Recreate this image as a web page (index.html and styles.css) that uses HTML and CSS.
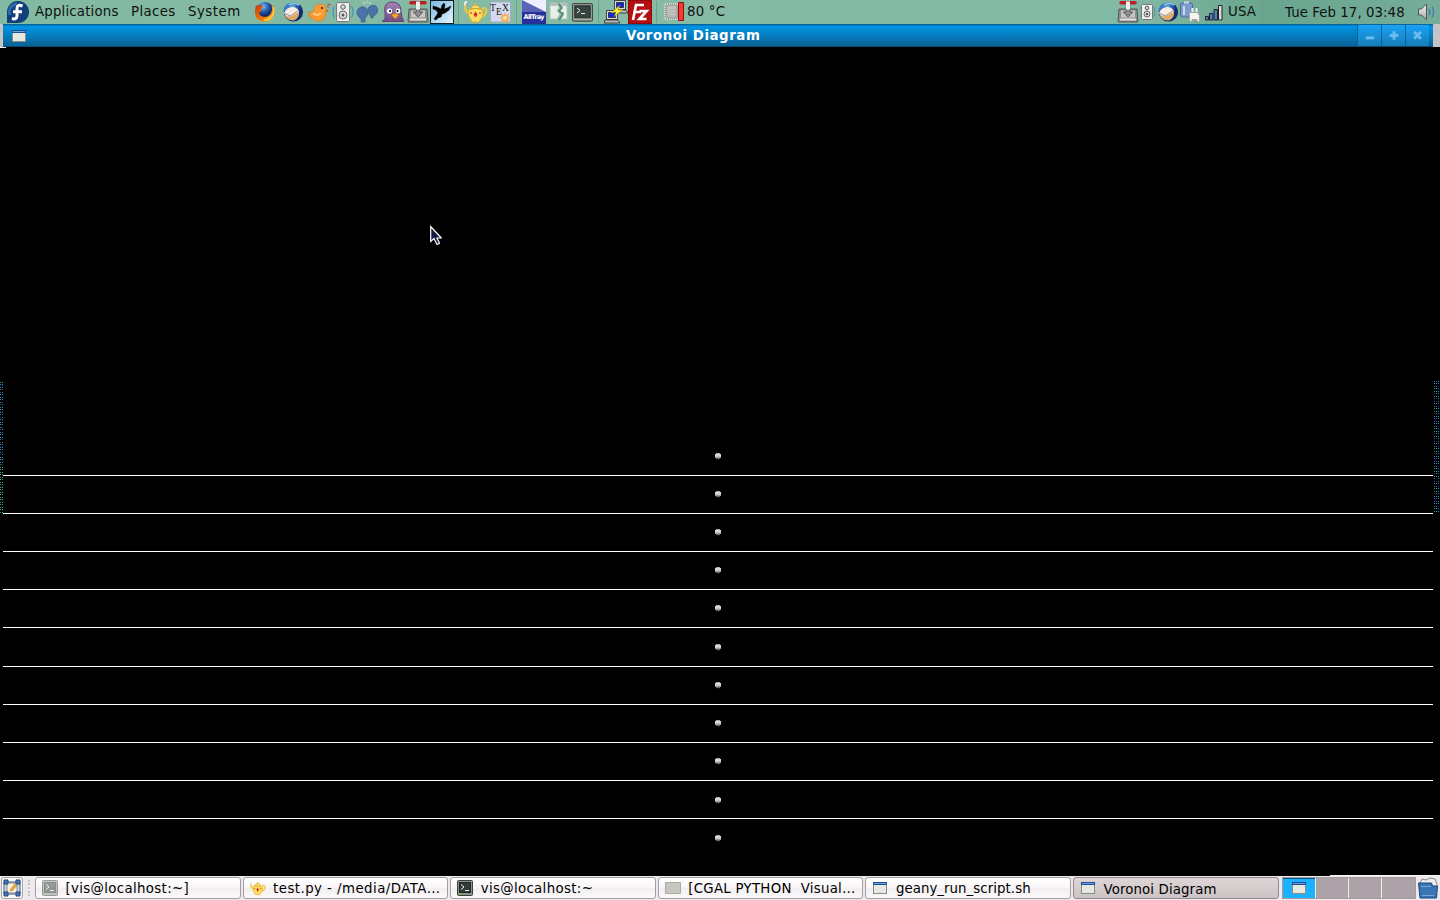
FILE: index.html
```html
<!DOCTYPE html>
<html lang="en">
<head>
<meta charset="utf-8">
<title>Voronoi Diagram</title>
<link rel="stylesheet" href="styles.css">
</head>
<body>
<svg class="defs" width="0" height="0" aria-hidden="true">
  <defs>
    <linearGradient id="fox" x1="0" y1="0" x2="1" y2="1"><stop offset="0" stop-color="#c93405"/><stop offset=".6" stop-color="#f27b0b"/><stop offset="1" stop-color="#ffd83c"/></linearGradient>
    <radialGradient id="globe" cx=".4" cy=".25"><stop offset="0" stop-color="#7fc4ee"/><stop offset=".5" stop-color="#2c69b8"/><stop offset="1" stop-color="#122a70"/></radialGradient>
    <linearGradient id="metal" x1="0" y1="0" x2="0" y2="1"><stop offset="0" stop-color="#f4f4f2"/><stop offset="1" stop-color="#aaa"/></linearGradient>
    <linearGradient id="violet" x1="0" y1="0" x2="0" y2="1"><stop offset="0" stop-color="#a087b5"/><stop offset="1" stop-color="#714b86"/></linearGradient>
    <linearGradient id="sky" x1="0" y1="0" x2="1" y2="1"><stop offset="0" stop-color="#78b6e2"/><stop offset="1" stop-color="#e8f6ff"/></linearGradient>
    <symbol id="i-window" viewBox="0 0 14 12"><rect x=".5" y=".5" width="13" height="11" fill="#e6e8e2" stroke="#8b8b88"/><path d="M0 0h14v3H0z" fill="#1d4f96"/><path d="M1 1h12v1H1z" fill="#6da0dc"/></symbol>
    <symbol id="i-term" viewBox="0 0 21 19"><rect x=".6" y=".6" width="19.8" height="17.6" rx="1.5" fill="#a9ada7" stroke="#444943" stroke-width="1.2"/><rect x="2.8" y="2.8" width="15.4" height="12" fill="#354441" stroke="#222b29"/><path d="M5 5l3 2.500L5 10M9 10.500h4" fill="none" stroke="#eee"/></symbol>
    <symbol id="i-termsmall" viewBox="0 0 16 16"><rect x=".5" y=".5" width="15" height="15" rx="1" fill="#8d928b" stroke="#3b403b"/><rect x="2.500" y="2.500" width="11" height="10" fill="#2f3c3a" stroke="#1f2725"/><path d="M4 4.500l3 2.500-3 2.500M8 10.500h4" fill="none" stroke="#eee"/><path d="M2 14h2" stroke="#6d0"/></symbol>
    <symbol id="i-geany" viewBox="0 0 24 24"><path d="M18 9c6-4 6 6-1 8M5 13Q1 13 1 5" fill="none" stroke="#f0c93c" stroke-width="2"/><path d="M4 10q8-3 15 0 0 8-3 10l-1 2H8l-1-2q-3-3-3-10z" fill="#fbdf62" stroke="#dcae2c"/><path d="M7 8.500h9l-2-3H9z" fill="#fbe47c" stroke="#d8a82b"/><path d="M11.500 3v2.500" stroke="#e5b93a" stroke-width="1.500"/><path d="M1 5q-1-3 2-3" stroke="#eef" stroke-width="2" fill="none"/><path d="M11.500 11.500l2 3-2 3-2-3z" fill="#d72728"/><circle cx="7" cy="13" r="1" fill="#e45735"/><circle cx="16" cy="13" r="1" fill="#e45735"/></symbol>
    <symbol id="i-bird" viewBox="0 0 24 24"><circle cx="12.500" cy="12" r="9.600" fill="url(#globe)"/><path d="M3 13q2-6 9-6 6 1 6 6-1 5-6 7-6 0-9-7z" fill="#f6eee2"/><path d="M4 16l6 .500 8-5q1 6-5 9-6 0-9-4.500z" fill="#dda969"/><path d="M3.500 13.500l6 2.500 7-5" fill="none" stroke="#8a7c72" stroke-width=".9"/><path d="M2 12Q3 4 9 3l3 1-3 3q-4 1-7 5z" fill="#3c7fc6"/><path d="M8 5q5-3 10 0" fill="none" stroke="#8bcaf0" stroke-width="1.600"/></symbol>
    <symbol id="i-tray" viewBox="0 0 24 24"><path d="M3 9h18l1 12q0 1-1 1H3q-1 0-1-1z" fill="#8b8e8c" stroke="#555"/><path d="M5 10.500h14v7H5z" fill="#c5c5c1"/><path d="M4 18.500h16v2H4z" fill="#e0e0dd"/><path d="M10.300 5h3.500v7h3l-4.700 5-4.800-5h3z" fill="#8e908d" stroke="#555" stroke-width=".9"/><path d="M5 2.800h14" stroke="#b92125" stroke-width="3.600" stroke-linecap="round"/><path d="M10 1.500h4v8h-4z" fill="#eee"/></symbol>
    <symbol id="i-speaker" viewBox="0 0 24 24"><rect x="5.600" y="2.600" width="13" height="19" rx="1" fill="#f1f1ef" stroke="#777"/><circle cx="12" cy="7" r="2.300" fill="#ddd" stroke="#555"/><circle cx="12" cy="15" r="4" fill="#ddd" stroke="#666"/><circle cx="12" cy="15" r="1.500" fill="#555"/><path d="M3.500 6q-3 6 0 12M20.500 6q3 6 0 12" fill="none" stroke="#4c91b7" stroke-width="1.200"/></symbol>
  </defs>
</svg>
<div class="desktop">
  <header class="panel top">
    <svg class="fedora" viewBox="0 0 22 22"><path d="M0 22V11A11 11 0 1 1 11 22z" fill="#123f7b"/><path d="M3 14a8 8 0 0 1 7-11" stroke="#2d68aa" stroke-width="3" fill="none"/><path d="M15.500 5.200q-5-2.500-5.500 2V15q-.5 4-5 2.500M6 10.700h9" fill="none" stroke="#fff" stroke-width="3"/></svg>
    <nav class="menus"><span class="m-app">Applications</span><span class="m-places">Places</span><span class="m-system">System</span></nav>
    <div class="launchers">
      <svg class="ico gap-4" viewBox="0 0 24 24"><circle cx="12" cy="11" r="9" fill="url(#globe)"/><path d="M3 5q-1 3-1 8 1 8 9 9 8 0 10-7 2-6-3-11 2 5 0 9-2 4-7 4-5-1-5-5l3-1-1-3 3-2-4-1-2 1z" fill="url(#fox)"/><path d="M20 7q2 6-2 10-3 3-7 3" fill="none" stroke="#ffd248" stroke-width="1.400"/></svg>
      <svg class="ico gap-2"><use href="#i-bird"/></svg>
      <svg class="ico" viewBox="0 0 24 24"><path d="M1 12l5 1q1-9 7-9 6 0 6 6l0 2q0 9-8 9-5 0-7-4l-3-1 2-1z" fill="#f99a35" stroke="#dc7f20" stroke-width=".7"/><path d="M6 13q4 4 8 0" fill="none" stroke="#ffc880" stroke-width="2"/><circle cx="15" cy="8" r="1" fill="#321"/><path d="M19 9l3 2-3 1" fill="#ce5f1b"/><path d="M21 8V4l3 1" fill="none" stroke="#c44f32"/></svg>
      <svg class="ico"><use href="#i-speaker"/></svg>
      <svg class="ico gap-2" viewBox="0 0 24 24"><g fill="#4b73a8" stroke="#365b90" stroke-width=".7"><path d="M3 9q4-4 8-1 3 3 1 8l-2 2v4H6q1-3-1-4-5-4-2-9z"/><path d="M14 7q3-3 7-1 3 3 1 7-2 3-4 3l0 2h-2l-1-3q-4-4-1-8z"/></g><g fill="#b5ccc2"><circle cx="9" cy="3" r="1.400"/><circle cx="12" cy="1.500" r="1"/><circle cx="15" cy="3" r="1.200"/></g></svg>
      <svg class="ico gap-1" viewBox="0 0 24 24"><path d="M1 21.500q4-2 3-8Q2 2 11 2q9 0 9 9 0 6 3 10.500z" fill="url(#violet)" stroke="#65417b"/><circle cx="8.500" cy="11" r="2.600" fill="#fff"/><circle cx="17" cy="11" r="2.400" fill="#fff"/><circle cx="9" cy="11" r="1.100"/><circle cx="16.500" cy="11" r="1.100"/><path d="M10 15l4-2 4 2-3.500 4z" fill="#f6a329" stroke="#b76713" stroke-width=".7"/></svg>
      <svg class="ico"><use href="#i-tray"/></svg>
      <svg class="ico" viewBox="0 0 24 24"><rect x=".5" y=".5" width="23" height="23" fill="url(#sky)" stroke="#10202b"/><path d="M3 6l5 1.500 3 1.500 1-4 2-2 1 2-1 4 3-1 4-2-2 4-4 3-3 1-1 3-3 1-2 2-2-1 2-3 2-3-2-3-3-1z" fill="#000" stroke="#000" stroke-width=".5"/></svg>
      <i class="sep s-a"></i>
      <svg class="ico gap-1"><use href="#i-geany"/></svg>
      <svg class="ico gap-3" viewBox="0 0 24 24"><rect x="1.500" y="2" width="20" height="20" fill="#d3daf0" stroke="#a3aec6"/><text class="tex" x="1" y="11">T</text><text class="tex" x="7" y="15">E</text><text class="tex" x="13" y="11">X</text><path d="M16 12l1 3 3-1-1 3 3 1-3 1 1 3-3-1-1 3-1-3-3 1 1-3-3-1 3-1-1-3 3 1z" fill="#f2ac5b"/><circle cx="16" cy="18" r="2" fill="#ffe2a6"/></svg>
      <i class="sep s-b"></i>
      <svg class="ico gap-1" viewBox="0 0 24 24"><path d="M0 0h24v24H0z" fill="#272f98"/><path d="M0 0h24v12H0z" fill="#5963b8"/><path d="M0 0h24v12z" fill="#eef"/><text class="alltray" x="1.500" y="18.500" textLength="21">AllTray</text></svg>
      <svg class="ico gap-1" viewBox="0 0 24 24"><path d="M3 3h7l2 5-2 3 3 3-3 5H3zM13 3h7v16h-6l3-6-5-2 3-3z" fill="#e7efea" stroke="#b0c4ba"/><path d="M3 3h7v3H3zM13 3h7v3h-6z" fill="#b3bfc0"/><path d="M12 4l3 4-3 3 4 3-4 6" fill="none" stroke="#4f8371" stroke-width="1.500"/></svg>
      <svg class="termico"><use href="#i-term"/></svg>
      <i class="sep s-c"></i>
      <svg class="ico" viewBox="0 0 24 24"><g stroke="#222" stroke-width=".8"><path d="M10.500 .5h11v9h-11zM2.500 10.500h11v9h-11z" fill="#ddd"/><path d="M12.500 2.500h7v5h-7zM4.500 12.500h7v5h-7z" fill="#1527df"/><path d="M11 10h11l2 3H14zM1 20h13l2 3H0z" fill="#bbb"/></g><path d="M16 5l-9 8 5-1-2 5 9-8-5 1z" fill="#ffef24" stroke="#9c8c00" stroke-width=".4"/></svg>
      <svg class="ico" viewBox="0 0 24 24"><path d="M0 0h24v24H0z" fill="#b60d11"/><path d="M.5 .5h23v23H.5z" fill="none" stroke="#650b0b" stroke-dasharray="2 2"/><path d="M5 20L8 5h8M6 12h7M11.500 11h7l-7 8h7" fill="none" stroke="#fff" stroke-width="2.700"/></svg>
      <i class="sep s-d"></i>
      <svg class="ico cpu" viewBox="0 0 24 24"><path d="M3 4h14v15H3z" fill="#aaa" stroke="#ddd" stroke-width="2" stroke-dasharray="1 1"/><path d="M4 5h11v13H4z" fill="#b7b7b1" stroke="#999"/><path d="M6 8h8M6 11h8M6 14h8" stroke="#ccc"/><path d="M16.500 2.500h5v18h-5z" fill="#f43b34" stroke="#930d11"/></svg>
      <span class="temp">80 °C</span>
    </div>
    <div class="tray">
      <svg class="ico"><use href="#i-tray"/></svg>
      <svg class="narrow" viewBox="4 0 16 24"><rect x="5.500" y="4.500" width="11" height="15" rx="1" fill="#f1f1ef" stroke="#777"/><circle cx="11" cy="8" r="1.800" fill="#ddd" stroke="#555"/><circle cx="11" cy="14" r="3" fill="#ddd" stroke="#666"/><circle cx="11" cy="14" r="1.200" fill="#555"/><path d="M4.300 7q-2 5 0 10M18 7q2 5 0 10" fill="none" stroke="#4c91b7"/></svg>
      <svg class="ico"><use href="#i-bird"/></svg>
      <svg class="ico" viewBox="0 0 24 24"><path d="M.5 5q0-2 2-2h8q2 0 2 2v10q0 2-2 2h-8q-2 0-2-2z" fill="#7d9ccb" stroke="#4a6b9e"/><path d="M4 1.500h5v2H4zM3 6h2v9H3z" fill="#c9daf0"/><path d="M12.500 8v4M16.500 8v4" stroke="#eee" stroke-width="2"/><path d="M9.500 12.500h8l2 3v6h-2.500v-2h-5v2H9.500v-6z" fill="#f4f4f1" stroke="#a3a8a2"/></svg>
      <svg class="signal" viewBox="0 0 18 17"><g stroke="#222" fill="#4d7fc0"><path d="M.5 12.500h3v3.500h-3zM4.500 9.500h3.500V16H4.500zM9 5.500h3.500V16H9z"/><path d="M13.500 1.500h3.500V16h-3.500z" fill="#d7dcd7"/></g></svg>
      <span class="kbd">USA</span><i class="sep s-e"></i>
      <time>Tue Feb 17, 03:48</time>
      <svg class="volume" viewBox="0 0 22 22"><path d="M2.500 8h3l5-5v16l-5-5h-3z" fill="url(#metal)" stroke="#555"/><path d="M13 8q2 3 0 6M16 5.500q3 5.500 0 11" fill="none" stroke="#4079b0" stroke-width="1.300"/></svg>
    </div>
  </header>
  <div class="titlebar">
    <svg class="winico"><use href="#i-window"/></svg>
    <h1>Voronoi Diagram</h1>
    <div class="controls">
      <svg viewBox="0 0 24 22"><path d="M8 13.500h9" stroke="#6cbcf0" stroke-width="3"/></svg>
      <svg viewBox="0 0 24 22"><path d="M8 11h9M12.500 6.500v9" stroke="#6cbcf0" stroke-width="3"/></svg>
      <svg viewBox="0 0 24 22"><path d="M8.500 7l7 7.500M15.500 7l-7 7.500" stroke="#6cbcf0" stroke-width="3"/></svg>
    </div>
  </div>
  <main class="canvas">
    <svg id="diagram" width="1440" height="829" viewBox="0 47 1440 829"></svg>
  </main>
  <footer class="panel bottom">
    <div class="show"><svg viewBox="0 0 18 18"><path d="M1 3h16v12H1z" fill="#cbdcea" stroke="#315b8c"/><path d="M4 4h10v10H4z" fill="#f5f1df" stroke="#888"/><path d="M1 1h4v4H1zM13 1h4v4h-4zM1 13h4v4H1zM13 13h4v4h-4z" fill="#4879b5" stroke="#234a7c"/><path d="M7 11l5-6 2 1-5 6z" fill="#efb331" stroke="#c46b28" stroke-width=".7"/></svg></div>
    <i class="grip"></i>
    <div class="tasks">
      <div class="task"><svg class="t-term dim"><use href="#i-termsmall"/></svg><span class="w-a">[vis@localhost:~]</span></div>
      <div class="task"><svg class="t-term"><use href="#i-geany"/></svg><span class="w-b">test.py - /media/DATA…</span></div>
      <div class="task"><svg class="t-term"><use href="#i-termsmall"/></svg><span class="w-c">vis@localhost:~</span></div>
      <div class="task"><svg class="t-term" viewBox="0 0 16 16"><path d="M.5 2.500h15v11H.5z" fill="#c6c8bd" stroke="#aaa"/></svg><span class="w-d">[CGAL PYTHON&nbsp; Visual…</span></div>
      <div class="task"><svg class="t-win"><use href="#i-window"/></svg><span class="w-e">geany_run_script.sh</span></div>
      <div class="task active"><svg class="t-win"><use href="#i-window"/></svg><span class="w-f">Voronoi Diagram</span></div>
    </div>
    <div class="pager"><b><svg class="t-win"><use href="#i-window"/></svg></b><b></b><b></b><b></b></div>
    <svg class="trash" viewBox="0 0 22 22"><path d="M3 6l2-4 4 1 4-2 5 1 2 5v3H3z" fill="#eee" stroke="#888"/><path d="M1.500 6h13l1 3h5l-1 12H3z" fill="#3975b5" stroke="#174776"/><path d="M4 9.500h10M5 18.500h12" stroke="#79a7d6"/></svg>
  </footer>
</div>
<svg class="pointer" viewBox="0 0 12 21"><path d="M.7 1.500v15l3.300-3 3 6 2.500-1.300-2.500-5.200h4.300z" fill="#151b45" stroke="#fff" stroke-width="1.200"/></svg>
<script src="diagram.js"></script>
</body>
</html>
```

FILE: styles.css
```css
* { box-sizing: border-box; }
body { margin: 0; background: #000; color: #101010; font: 13.33px/20px "DejaVu Sans", sans-serif; overflow: hidden; }
.defs { position: absolute; }
.desktop { width: 1440px; height: 900px; display: grid; grid-template-rows: 24px 23px 829px 24px; }
svg { display: block; flex: none; }
.panel { display: flex; }
.top { background: linear-gradient(90deg, #82b9a2, #86bba6 45%, #83baa6 78%, #69a58e 88%, #75ad9a); align-items: flex-start; white-space: nowrap; }
.fedora { width: 22px; height: 22px; margin: 1px 6px 0 7px; }
.menus { display: flex; width: 218px; padding-top: 2px; }
.m-app { width: 96px; letter-spacing: .18px; }
.m-places { width: 57px; letter-spacing: .35px; }
.m-system { letter-spacing: .5px; }
.launchers { display: flex; flex: 1; }
.ico { width: 24px; height: 24px; }
.gap-4 { margin-right: 4px; }
.gap-3 { margin-right: 3px; }
.gap-2 { margin-right: 2px; }
.gap-1 { margin-right: 1px; }
.sep { width: 1px; height: 22px; margin: 1px 0; background: #6f9f8b; flex: none; }
.s-a { margin-left: 4px; margin-right: 5px; }
.s-b { margin-right: 5px; }
.s-c { margin-left: 5px; margin-right: 5px; }
.s-d { margin-left: 4px; margin-right: 5px; }
.tex { font: 9.500px "Liberation Serif", serif; fill: #151515; }
.alltray { font: bold 6.500px "DejaVu Sans", sans-serif; fill: #fff; }
.termico { width: 21px; height: 19px; margin-top: 3px; }
.temp { padding: 2px 0 0 1px; letter-spacing: .2px; }
.tray { display: flex; width: 324px; }
.narrow { width: 16px; height: 24px; }
.signal { width: 18px; height: 17px; margin: 4px 5px 0 1px; }
.kbd { width: 34px; padding-top: 2px; letter-spacing: .2px; }
.s-e { margin-right: 22px; }
time { width: 131px; padding-top: 2.5px; letter-spacing: .06px; }
.volume { width: 22px; height: 22px; margin-top: 1px; }
.titlebar { display: flex; margin-right: 7px; background: linear-gradient(#07659e 0 1px, #0095e7 2px, #0a6294 22px, #064c73 22px); border-left: 3px solid #c6c3c5; box-shadow: 7px 0 #c6c3c5; }
.winico { width: 14px; height: 12px; margin: 6px 0 0 9px; }
h1 { flex: 1; margin: 1px 0 0; padding-left: 600px; color: #fff; font-size: 13.33px; line-height: 21px; letter-spacing: .56px; white-space: nowrap; }
.controls { display: flex; width: 76px; padding-top: 1px; }
.controls svg { width: 24px; height: 21px; border-left: 1px solid #08639a; background: linear-gradient(#1aa2f6, #167db6); }
.canvas { background: #000; }
.bottom { background: #eee9ed; }
.show { width: 22px; height: 22px; margin: 1px 0 0 1px; padding: 1px; border: 1px solid #aaa4a7; border-radius: 3px; background: #faf8f9; }
.show svg { width: 18px; height: 18px; }
.grip { width: 2px; height: 16px; margin: 4px 5px 0; border-left: 2px dotted #ccc5ca; }
.tasks { display: grid; grid-template-columns: repeat(6, 205.6px); column-gap: 2px; margin-top: 1px; }
.task { display: flex; height: 22px; padding-left: 6px; border: 1px solid #a49ea2; border-radius: 3px; background: linear-gradient(#fff, #f9f5f7 49%, #f2eef0 50%, #fbf9fa); color: #000; white-space: nowrap; }
.task span { margin-left: 7.5px; padding-top: 1px; }
.w-a, .w-c { letter-spacing: .34px; }
.w-b { letter-spacing: .45px; }
.w-d { letter-spacing: .27px; }
.w-e { letter-spacing: .06px; }
.w-f { letter-spacing: .12px; }
.active { background: linear-gradient(#ddd5d6, #cbc3c4); border-color: #91898b; }
.task.active span { padding-top: 2px; }
.t-term { width: 16px; height: 16px; margin-top: 2px; }
.dim { opacity: .5; }
.t-win { width: 14px; height: 12px; margin: 4px 1px 0; }
.task .t-win + span { margin-left: 7.5px; }
.pager { display: grid; grid-template-columns: 32px 32px 32px 33px; column-gap: 1px; width: 134px; height: 22px; margin: 1px 0 0 3px; border: 1px solid #a39b9e; background: #eee; }
.pager b { background: #ada2a7; }
.pager b:first-child { background: #1ab2ff; border-top: 1px solid #075886; }
.pager .t-win { margin: 3px 0 0 9px; }
.trash { width: 22px; height: 22px; margin: 1px 0 0 1px; }
.pointer { position: absolute; left: 430px; top: 225px; width: 12px; height: 21px; }
```

FILE: diagram.js
```js
const diagram = document.getElementById("diagram");

function box(x, y, width, height, fill) {
  const r = document.createElementNS("http://www.w3.org/2000/svg", "rect");
  Object.entries({ x, y, width, height, fill }).forEach(([k, v]) => r.setAttribute(k, v));
  diagram.appendChild(r);
}

// Cell edges between neighbouring sites.
[475, 513, 551, 589, 627, 666, 704, 742, 780, 818].forEach(y => box(3, y, 1430, 1, "#fff"));

// Sites, drawn as small shaded spheres.
[456, 494, 532, 570, 608, 647, 685, 723, 761, 800, 838].forEach(y => {
  box(716, y - 3, 4, 1, "#aaa");
  box(715, y - 2, 6, 2, "#d8d8d8");
  box(715, y, 6, 1, "#c4c4c4");
  box(715, y + 1, 6, 1, "#999");
  box(716, y + 2, 4, 1, "#666");
  box(718, y + 3, 1, 1, "#333");
});

// Stray framebuffer pixels beside the window.
const upper = ["#2aa05a", "#2a8cff", "#2a14e0", "#2a8cff", "#2a9050"];
const lower = ["#2aa04a", "#35b8c0", "#40b82e", "#2ea0a6"];
for (let y = 382, i = 0; y < 514; i++) {
  const set = y < 465 ? upper : lower;
  box(0, y, 1, 1, set[(i * 3) % set.length]);
  box(2, y, 1, 1, set[(i * 2 + 1) % set.length]);
  y += i % 2 ? 3 : 2;
}
const right = ["#1f6cff", "#2a88e0", "#2a14d0", "#2a9060", "#3aa03c", "#2aa0bd"];
for (let y = 381, i = 0; y < 513; y += i % 2 ? 3 : 2, i++) {
  [1434, 1436, 1438].forEach((x, j) => box(x, y, 1, 1, right[(i * 5 + j * 2 + (i >> 2)) % right.length]));
}

// Frame corner below the title bar and panel edge at the lower right.
box(0, 47, 6, 1, "#f0eef0");
box(1330, 875, 110, 1, "#f6f2f5");
```
